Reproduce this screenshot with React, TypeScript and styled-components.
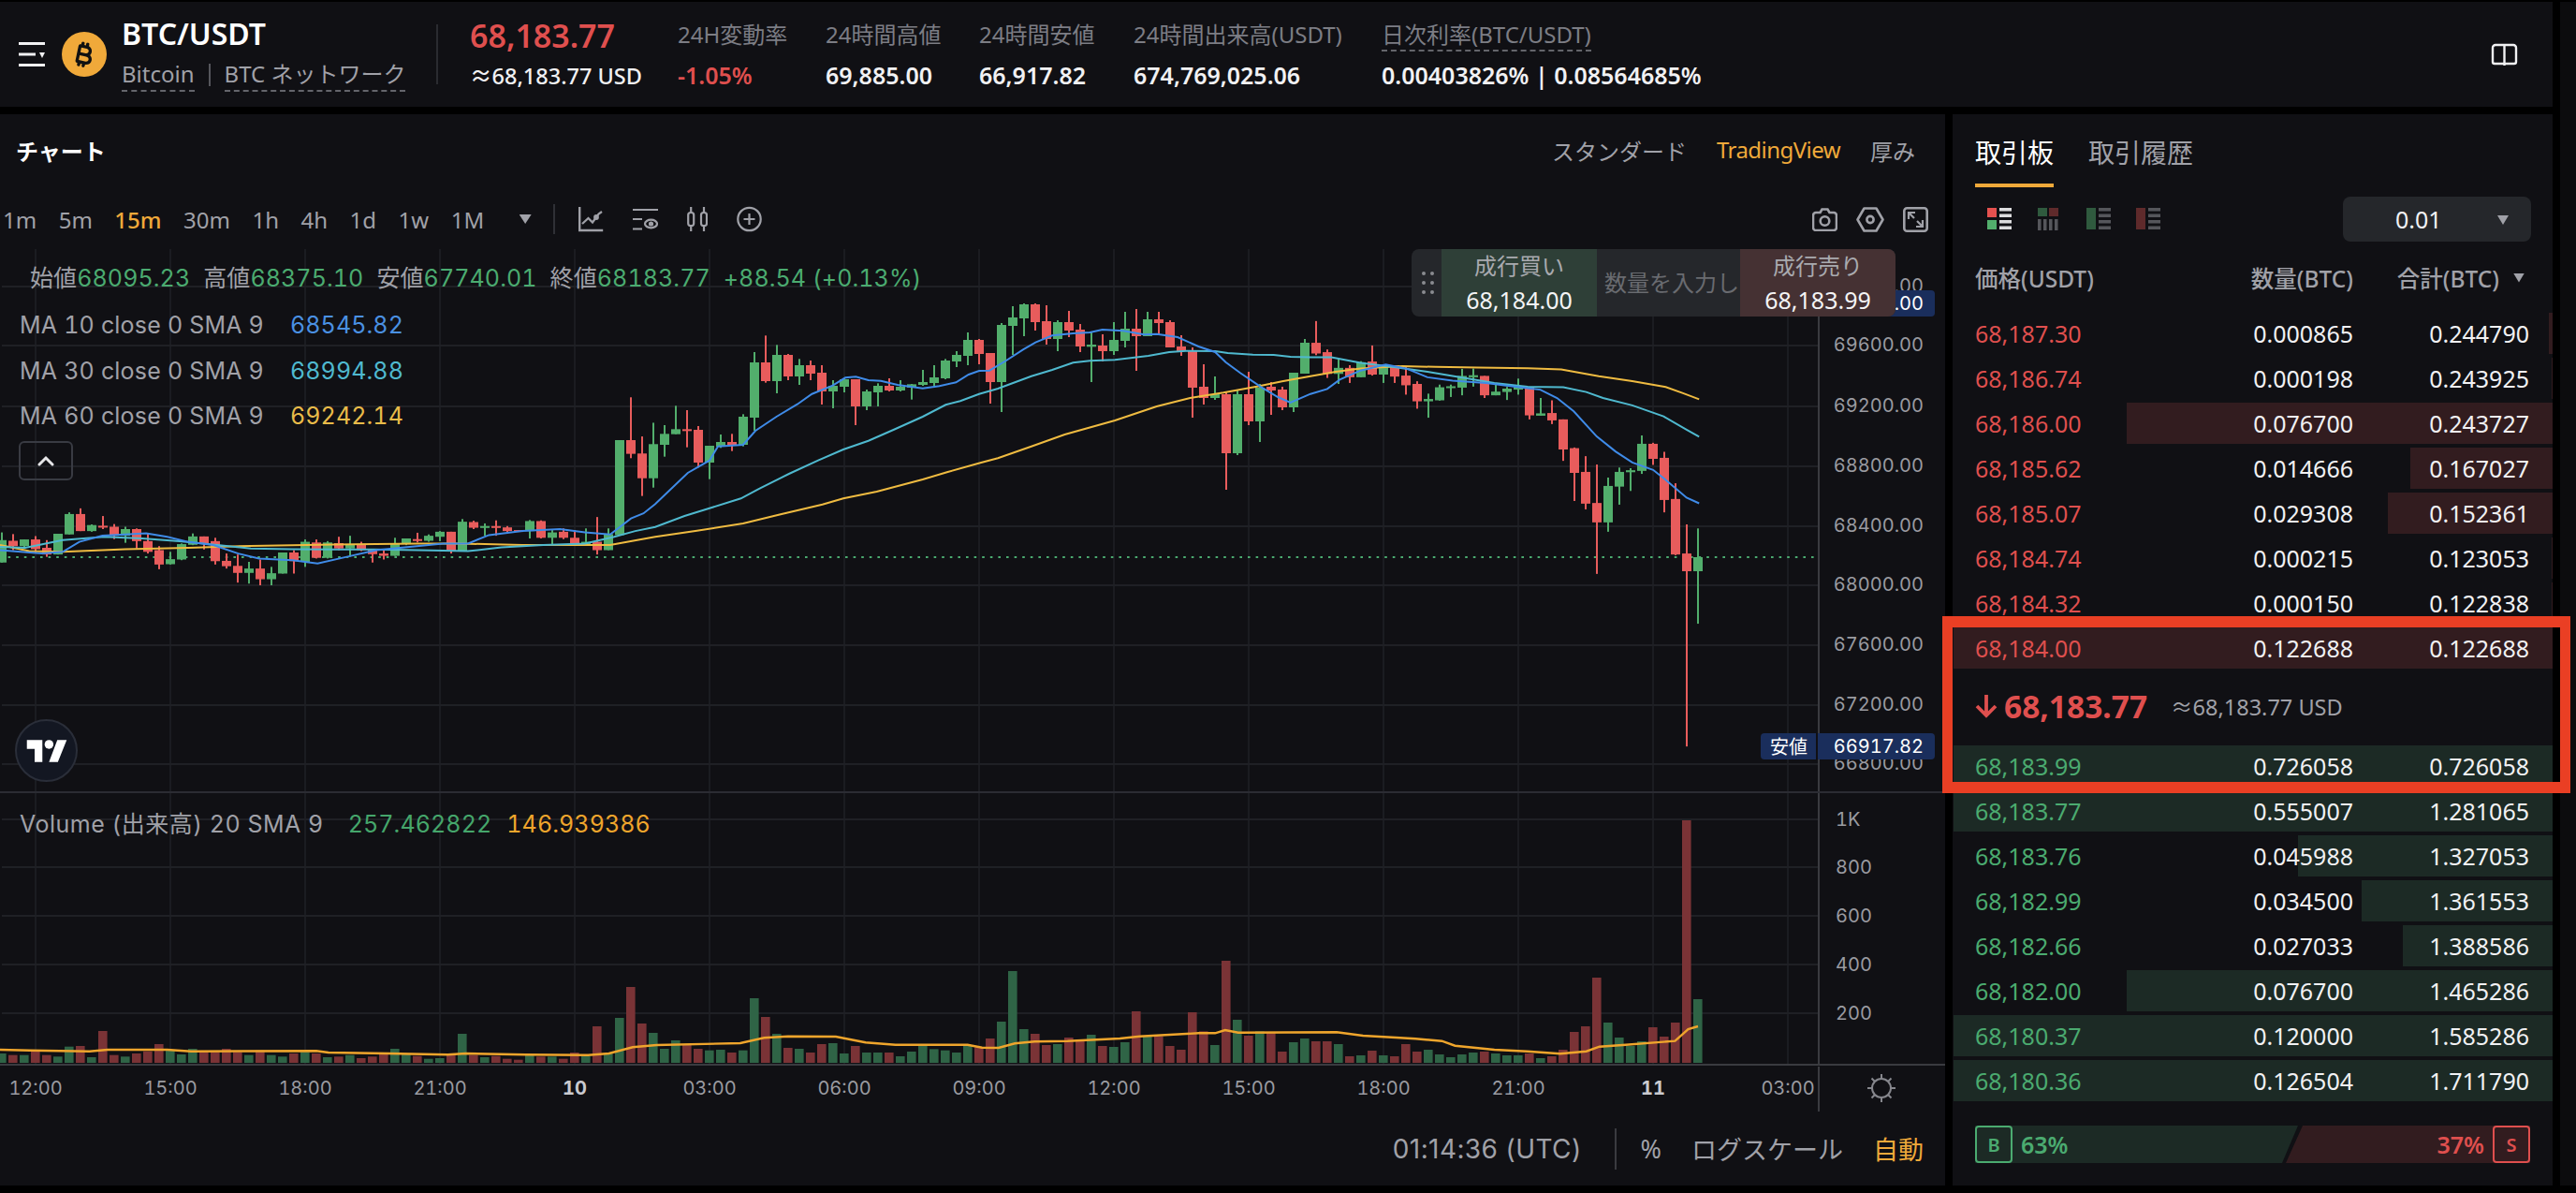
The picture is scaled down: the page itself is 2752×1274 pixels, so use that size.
import React from 'react';
import styled, { createGlobalStyle } from 'styled-components';
import { FaBitcoinSign } from 'react-icons/fa6';

const GlobalStyle = createGlobalStyle`
    html, body {
        margin: 0;
        padding: 0;
        background: #000;
    }
    * {
        box-sizing: border-box;
    }
`;

const PANEL = '#101014';
const GREY = '#a0a1a8';
const DIM = '#7c7d84';
const ORANGE = '#efa93a';
const RED = '#df4f4e';
const GREEN = '#4bab70';
const UP = '#52ae6c';
const DOWN = '#e85c5c';
const VOL_UP = '#2f6446';
const VOL_DOWN = '#7a3336';
const SANS = `"Noto Sans", "Noto Sans CJK JP", sans-serif`;
const CHART_FONT = `Inter, "Noto Sans CJK JP", sans-serif`;

/* ---------- chart data, in pixels of the plot ---------- */

type Raw = [number, number, number, number, number];

const toCandle = (scale: number) => ([up, top, bottom, wickTop, wickBottom]: Raw) => ({
    up: up === 1,
    top: 300 + top / scale,
    bottom: 300 + bottom / scale,
    wickTop: 300 + wickTop / scale,
    wickBottom: 300 + wickBottom / scale,
});

const firstRun: Raw[] = [
    [1, 775, 842, 752, 842], [0, 777, 793, 757, 805], [1, 773, 793, 773, 800], [0, 773, 802, 763, 815],
    [0, 798, 818, 775, 825], [1, 756, 818, 756, 818], [1, 697, 758, 692, 758], [0, 697, 748, 680, 748],
    [1, 730, 748, 728, 750], [0, 732, 737, 703, 742], [0, 735, 762, 727, 772], [1, 742, 762, 735, 783],
    [0, 742, 778, 740, 800], [0, 778, 810, 756, 815], [0, 805, 848, 793, 862], [1, 832, 847, 810, 848],
    [1, 787, 833, 785, 835], [1, 764, 789, 755, 790], [0, 764, 784, 764, 803], [0, 778, 838, 768, 848],
    [0, 837, 853, 815, 860], [0, 852, 873, 818, 902], [1, 860, 873, 840, 905], [0, 860, 892, 833, 910],
    [1, 874, 892, 855, 910], [1, 812, 875, 812, 875], [0, 812, 838, 805, 875], [1, 780, 840, 773, 855],
    [0, 782, 828, 773, 830], [1, 782, 828, 778, 830], [0, 784, 800, 765, 805], [1, 788, 800, 762, 825],
    [0, 787, 805, 780, 808], [0, 804, 817, 804, 842], [0, 815, 822, 805, 833], [1, 785, 822, 768, 822],
    [1, 770, 787, 770, 790], [0, 772, 777, 753, 782], [1, 762, 777, 758, 780], [1, 750, 765, 748, 778],
    [0, 750, 808, 750, 815], [1, 720, 808, 712, 808], [0, 721, 738, 717, 742], [1, 733, 737, 725, 762],
    [0, 733, 738, 716, 762], [0, 737, 748, 733, 752], [0, 745, 749, 745, 750], [1, 718, 748, 715, 770],
    [0, 718, 768, 716, 770], [1, 752, 768, 745, 788], [0, 750, 768, 740, 772], [0, 768, 786, 745, 790],
    [1, 780, 788, 740, 790], [0, 780, 805, 706, 818], [1, 757, 805, 740, 805], [1, 476, 760, 476, 760],
    [0, 476, 517, 348, 530], [0, 516, 590, 465, 643], [1, 488, 590, 424, 618],
];

const secondRun: Raw[] = [
    [1, 490, 525, 462, 563], [1, 475, 491, 400, 491], [0, 475, 480, 414, 533], [0, 477, 582, 465, 598],
    [1, 528, 582, 528, 635], [1, 516, 531, 492, 535], [0, 516, 525, 490, 545], [1, 435, 525, 427, 530],
    [1, 261, 438, 228, 480], [0, 261, 321, 175, 326], [1, 237, 321, 205, 360], [0, 237, 306, 234, 318],
    [1, 270, 306, 250, 333], [0, 270, 297, 255, 318], [0, 294, 354, 270, 396], [1, 336, 354, 318, 408],
    [1, 315, 339, 312, 357], [0, 315, 402, 315, 462], [1, 354, 402, 348, 414], [1, 336, 357, 328, 402],
    [0, 336, 351, 312, 354], [1, 339, 351, 318, 354], [1, 331, 342, 330, 380], [1, 324, 333, 285, 336],
    [1, 309, 327, 270, 336], [1, 255, 312, 250, 315], [1, 237, 258, 225, 276], [1, 189, 240, 165, 270],
    [0, 189, 234, 186, 267], [0, 231, 324, 231, 393], [1, 141, 324, 135, 420], [1, 117, 144, 81, 237],
    [1, 75, 120, 72, 177], [0, 75, 132, 72, 159], [0, 129, 186, 78, 204], [1, 132, 186, 126, 225],
    [0, 132, 159, 96, 180], [0, 156, 210, 138, 228], [1, 204, 211, 165, 324], [0, 207, 225, 171, 258],
    [1, 189, 225, 132, 237], [1, 153, 192, 99, 213], [0, 153, 177, 90, 288], [1, 123, 177, 99, 177],
    [0, 123, 135, 99, 171], [0, 132, 213, 126, 213], [0, 210, 225, 174, 240], [0, 222, 342, 213, 438],
    [0, 339, 375, 267, 396], [1, 363, 375, 306, 381], [0, 363, 552, 354, 669], [1, 363, 552, 351, 558],
    [0, 363, 450, 291, 462], [1, 342, 450, 330, 516], [0, 339, 351, 324, 429], [0, 348, 405, 339, 414],
    [1, 294, 405, 294, 420], [1, 198, 297, 186, 297],
];

const thirdRun: Raw[] = [
    [0, 185, 217, 120, 222], [0, 213, 278, 205, 290], [1, 260, 278, 234, 308], [0, 260, 288, 252, 305],
    [1, 243, 288, 240, 288], [0, 241, 280, 193, 283], [1, 252, 280, 250, 305], [0, 252, 286, 252, 305],
    [0, 283, 312, 255, 340], [0, 308, 360, 300, 382], [1, 353, 360, 337, 409], [1, 318, 357, 310, 358],
    [1, 315, 319, 310, 347], [1, 284, 319, 263, 342], [1, 282, 288, 262, 316], [0, 284, 342, 284, 350],
    [1, 331, 342, 306, 342], [1, 322, 332, 317, 356], [1, 315, 325, 292, 340], [0, 317, 402, 317, 414],
    [1, 396, 403, 350, 403], [0, 395, 417, 357, 428], [0, 414, 504, 414, 538], [0, 500, 574, 498, 658],
    [0, 571, 666, 524, 683], [0, 664, 722, 549, 876], [1, 613, 722, 588, 750], [1, 571, 615, 558, 669],
    [1, 566, 572, 560, 628], [1, 487, 568, 462, 577], [0, 487, 532, 484, 550], [0, 529, 655, 511, 692],
    [0, 652, 818, 605, 820], [0, 815, 868, 728, 1392], [1, 826, 868, 740, 1025],
];

const candles = [
    ...firstRun.map(toCandle(2.8)),
    ...secondRun.map(toCandle(3)),
    ...thirdRun.map(toCandle(2.8)),
];

const volumeTops = [
    795, 800, 800, 785, 800, 805, 773, 771, 807, 723, 800, 805, 795, 788, 765, 785, 798, 780, 790,
    790, 780, 790, 800, 785, 800, 805, 795, 790, 795, 807, 805, 800, 810, 805, 795, 780, 795, 803,
    812, 810, 800, 732, 800, 807, 803, 812, 815, 800, 805, 805, 812, 792, 803, 708, 795, 681, 582,
    699, 729, 780, 753, 766, 780, 785, 783, 792, 785, 618, 678, 732, 777, 780, 792, 765, 762, 795,
    771, 792, 792, 792, 804, 789, 771, 781, 785, 792, 770, 775, 747, 693, 531, 717, 732, 768, 765,
    744, 750, 735, 771, 774, 759, 660, 740, 740, 771, 783, 663, 724, 768, 498, 687, 738, 724, 726,
    789, 759, 747, 756, 756, 765, 804, 801, 786, 801, 804, 765, 789, 783, 798, 807, 798, 792, 789,
    795, 801, 801, 795, 810, 804, 783, 726, 708, 552, 696, 744, 771, 756, 711, 741, 696, 48, 621,
];

type Pt = [number, number];

const segment = (x0: number, sx: number, y0: number, sy: number, pts: Pt[]): Pt[] =>
    pts.map(([x, y]) => [x0 + x / sx, y0 + y / sy] as Pt);

const toPoints = (pts: Pt[]) => pts.map(([x, y]) => `${x.toFixed(1)},${y.toFixed(1)}`).join(' ');

const maBlue = toPoints([
    ...segment(0, 2.24, 300, 2.8, [[0, 805], [50, 810], [100, 815], [150, 810], [190, 780], [245, 762], [300, 758], [350, 755], [400, 765], [450, 780], [510, 790], [570, 815], [620, 830], [700, 835], [760, 845], [830, 825], [900, 805], [980, 795], [1060, 785], [1120, 785], [1170, 760], [1250, 748], [1340, 742], [1400, 752], [1460, 758], [1510, 710], [1540, 695]]),
    ...segment(700, 2.24, 300, 3, [[0, 715], [78, 615], [130, 575], [150, 530], [210, 525], [240, 480], [290, 435], [340, 395], [375, 362], [425, 335], [455, 310], [480, 307], [510, 318], [540, 320], [580, 333], [640, 344], [680, 337], [720, 325], [750, 300], [775, 288], [800, 287], [840, 255], [880, 220], [910, 197], [950, 175], [1000, 168], [1040, 165], [1070, 156], [1120, 160], [1170, 172], [1200, 170], [1250, 180], [1300, 210], [1340, 228], [1365, 260], [1400, 295], [1450, 340], [1490, 372], [1520, 390]]),
    ...segment(1400, 2.24, 300, 2.8, [[0, 338], [40, 323], [70, 295], [120, 268], [180, 250], [230, 262], [280, 288], [340, 298], [420, 305], [500, 318], [550, 325], [590, 350], [630, 390], [685, 465], [730, 510], [770, 543], [820, 565], [850, 595], [900, 648], [930, 665]]),
]);

const maTeal = toPoints([
    ...segment(0, 2.24, 300, 2.8, [[0, 795], [60, 798], [150, 775], [250, 765], [340, 770], [430, 778], [520, 790], [600, 800], [700, 802], [800, 803], [900, 803], [1000, 805], [1120, 808], [1200, 797], [1300, 790], [1400, 785], [1470, 765], [1520, 748]]),
    ...segment(700, 2.24, 300, 3, [[0, 788], [70, 753], [130, 728], [205, 697], [250, 665], [320, 618], [390, 575], [450, 540], [510, 512], [570, 477], [640, 435], [695, 397], [730, 385], [775, 362], [820, 345], [900, 305], [950, 285], [1000, 262], [1040, 256], [1100, 253], [1180, 240], [1230, 228], [1270, 224], [1340, 225], [1370, 231], [1430, 236], [1480, 237], [1520, 243]]),
    ...segment(1400, 2.24, 300, 2.8, [[0, 228], [50, 228], [120, 245], [200, 258], [280, 272], [360, 288], [440, 305], [520, 316], [605, 318], [660, 332], [700, 350], [770, 372], [845, 405], [900, 445], [930, 466]]),
]);

const maGold = toPoints([
    ...segment(0, 2.24, 300, 2.8, [[0, 790], [70, 808], [150, 810], [300, 802], [450, 798], [600, 792], [800, 788], [1000, 785], [1100, 785], [1250, 790], [1460, 790]]),
    ...segment(700, 2.24, 300, 3, [[0, 820], [100, 800], [210, 777], [300, 748], [400, 716], [450, 697], [530, 675], [640, 636], [700, 612], [780, 582], [820, 568], [900, 530], [980, 492], [1100, 447], [1200, 402], [1280, 375], [1360, 358], [1440, 338], [1500, 322]]),
    ...segment(1400, 2.24, 300, 2.8, [[0, 285], [60, 272], [120, 262], [220, 255], [300, 257], [400, 259], [520, 261], [600, 265], [690, 285], [770, 300], [850, 317], [890, 335], [930, 354]]),
]);

const volumeMa = toPoints([
    ...segment(0, 1.568, 860, 3, [[0, 783], [50, 785], [100, 787], [150, 788], [180, 783], [280, 783], [320, 788], [530, 787], [550, 792], [650, 795], [750, 799], [780, 795], [880, 799], [985, 800], [1020, 795], [1060, 775], [1100, 768], [1240, 762], [1280, 745], [1320, 740], [1400, 741], [1450, 760], [1500, 767]]),
    ...segment(1000, 1.425, 860, 3, [[0, 767], [48, 767], [70, 776], [95, 777], [120, 763], [150, 757], [200, 755], [280, 747], [310, 740], [400, 730], [425, 730], [440, 720], [460, 728], [610, 727], [650, 738], [700, 744], [730, 748], [770, 755], [790, 770], [850, 783], [900, 788], [950, 796], [990, 788], [1010, 773], [1050, 767], [1125, 755], [1145, 717], [1160, 708]]),
]);

const gridX = [38, 182, 326, 470, 614, 758, 902, 1046, 1190, 1334, 1478, 1622, 1766, 1910];
const priceTicks: [number, string][] = [
    [305, '.00'], [368, '69600.00'], [433, '69200.00'], [497, '68800.00'], [561, '68400.00'],
    [624, '68000.00'], [688, '67600.00'], [752, '67200.00'], [815, '66800.00'],
];
const volumeTicks: [number, string][] = [[875, '1K'], [926, '800'], [978, '600'], [1030, '400'], [1082, '200']];
const timeTicks = ['12:00', '15:00', '18:00', '21:00', '10', '03:00', '06:00', '09:00', '12:00', '15:00', '18:00', '21:00', '11', '03:00'];

/* ---------- page ---------- */

const Page = styled.div`
    position: relative;
    display: flex;
    gap: 8px;
    width: 2752px;
    height: 1274px;
    overflow: hidden;
    background: #000;
    font-family: ${SANS};
`;

const Main = styled.div`
    display: flex;
    flex-direction: column;
    gap: 8px;
    flex: 0 0 2726px;
    padding: 2px 0 8px;
`;

const ScrollTrack = styled.div`
    flex: 1;
    margin-top: 2px;
    margin-bottom: 8px;
    background: #0c0c0e;
`;

const Callout = styled.div`
    position: absolute;
    left: 2075px;
    top: 658px;
    width: 671px;
    height: 189px;
    border: solid #ea3f24;
    border-width: 12px 11px;
`;

/* ---------- top bar ---------- */

const TopBar = styled.header`
    display: flex;
    align-items: center;
    flex: 0 0 112px;
    padding: 0 37px 0 20px;
    background: ${PANEL};
`;

const CoinBadge = styled.div`
    display: flex;
    align-items: center;
    justify-content: center;
    flex: 0 0 48px;
    height: 48px;
    margin: 0 16px 0 18px;
    border-radius: 50%;
    background: #f0a93a;
    color: #111;
    font-size: 27px;
    svg {
        transform: rotate(12deg);
    }
`;

const NameBlock = styled.div`
    display: flex;
    flex-direction: column;
    gap: 8px;
    flex: 0 0 336px;
`;

const PairName = styled.div`
    color: #fff;
    font-size: 32px;
    font-weight: 600;
    line-height: 36px;
`;

const SubLine = styled.div`
    display: flex;
    align-items: center;
    gap: 15px;
    color: ${GREY};
    font-size: 24px;
    line-height: 34px;
`;

const Dashed = styled.span`
    border-bottom: 2px dashed #64656b;
    white-space: nowrap;
`;

const Pipe = styled.i`
    width: 2px;
    height: 24px;
    background: #55565c;
`;

const VRule = styled.div`
    flex: 0 0 2px;
    height: 64px;
    background: #2a2b30;
`;

const PriceBlock = styled.div`
    display: flex;
    flex-direction: column;
    gap: 8px;
    flex: 0 0 222px;
    margin-left: 34px;
`;

const LastPrice = styled.div`
    color: ${RED};
    font-size: 34px;
    font-weight: 600;
    line-height: 38px;
`;

const UsdPrice = styled.div`
    color: #f1f1f3;
    font-size: 23.5px;
    font-weight: 500;
    line-height: 32px;
    white-space: nowrap;
`;

const Stat = styled.div<{ $width?: number }>`
    display: flex;
    flex-direction: column;
    align-items: flex-start;
    gap: 11px;
    flex: 0 0 ${p => (p.$width ? `${p.$width}px` : 'auto')};
    white-space: nowrap;
`;

const StatLabel = styled.div`
    color: ${DIM};
    font-size: 24px;
    line-height: 32px;
`;

const StatValue = styled.div<{ $color?: string }>`
    color: ${p => p.$color || '#f1f1f3'};
    font-size: 25px;
    font-weight: 600;
    line-height: 32px;
`;

const BookButton = styled.div`
    display: flex;
    margin-left: auto;
`;

/* ---------- chart column ---------- */

const Columns = styled.div`
    display: flex;
    gap: 8px;
    flex: 1;
    min-height: 0;
`;

const ChartPanel = styled.section`
    display: flex;
    flex-direction: column;
    flex: 0 0 2078px;
    background: ${PANEL};
`;

const ChartHead = styled.div`
    display: flex;
    align-items: center;
    justify-content: space-between;
    flex: 0 0 80px;
    padding: 0 32px 3px 17px;
`;

const ChartTitle = styled.div`
    color: #fff;
    font-size: 24px;
    font-weight: 700;
`;

const ViewTabs = styled.div`
    display: flex;
    gap: 32px;
`;

const ViewTab = styled.span<{ $active?: boolean }>`
    color: ${p => (p.$active ? ORANGE : GREY)};
    font-size: 24px;
    letter-spacing: ${p => (p.$active ? '-0.55px' : 0)};
`;

const Toolbar = styled.div`
    display: flex;
    align-items: center;
    gap: 23.5px;
    flex: 0 0 64px;
    padding: 0 18px 0 3px;
`;

const Interval = styled.span<{ $active?: boolean }>`
    color: ${p => (p.$active ? ORANGE : GREY)};
    font-size: 24px;
    font-weight: ${p => (p.$active ? 500 : 400)};
`;

const Caret = styled.i`
    flex: 0 0 auto;
    width: 13px;
    height: 10px;
    margin-left: 14px;
    background: ${GREY};
    clip-path: polygon(0 0, 100% 0, 50% 100%);
`;

const ToolRule = styled.i`
    width: 2px;
    height: 32px;
    background: #2f3036;
`;

const DrawTools = styled.div`
    display: flex;
    align-items: center;
    gap: 31px;
    margin-left: 1px;
`;

const ToolSet = styled.div`
    display: flex;
    align-items: center;
    gap: 20px;
    margin-left: auto;
`;

const PlotWrap = styled.div`
    position: relative;
    height: 581px;
`;

const Plot = styled.svg`
    display: block;
    font-family: ${CHART_FONT};
    font-variant-numeric: tabular-nums;
`;

const AxisText = styled.text`
    fill: #9a9ba1;
    font-size: 20px;
`;

const BadgeText = styled.text`
    fill: #fff;
    font-size: 20px;
`;

const TimeText = styled.text<{ $bold?: boolean }>`
    fill: ${p => (p.$bold ? '#c9cacf' : '#9a9ba1')};
    font-size: 20px;
    font-weight: ${p => (p.$bold ? 700 : 400)};
    text-anchor: middle;
`;

const OhlcRow = styled.div`
    position: absolute;
    left: 32px;
    top: 14px;
    display: flex;
    gap: 14px;
    color: ${GREY};
    font-family: ${CHART_FONT};
    font-size: 25px;
    font-variant-numeric: tabular-nums;
    letter-spacing: 0.1px;
    line-height: 34px;
    white-space: nowrap;
`;

const Green = styled.span`
    color: ${GREEN};
`;

const Legend = styled.div`
    position: absolute;
    left: 21px;
    top: 57px;
    display: flex;
    flex-direction: column;
    align-items: flex-start;
    font-family: ${CHART_FONT};
    font-variant-numeric: tabular-nums;
`;

const LegendRow = styled.div`
    display: grid;
    grid-template-columns: 289px auto;
    color: ${GREY};
    font-size: 25px;
    letter-spacing: 0.2px;
    line-height: 48.5px;
    white-space: nowrap;
`;

const LegendValue = styled.span<{ $color: string; $gap?: number }>`
    margin-left: ${p => p.$gap || 0}px;
    color: ${p => p.$color};
    letter-spacing: 0.1px;
`;

const CollapseButton = styled.div`
    display: flex;
    align-items: center;
    justify-content: center;
    width: 58px;
    height: 42px;
    margin: 2px 0 0 -1px;
    border: 2px solid #393b43;
    border-radius: 6px;
`;

const TvBadge = styled.div`
    position: absolute;
    left: 16px;
    top: 502px;
    display: flex;
    align-items: center;
    justify-content: center;
    width: 67px;
    height: 67px;
    border: 2px solid #2a2e39;
    border-radius: 50%;
    background: #131722;
`;

const QuickTrade = styled.div`
    position: absolute;
    left: 1508px;
    top: 0;
    display: flex;
    width: 517px;
    height: 72px;
    overflow: hidden;
    border-radius: 8px;
    background: #25272b;
    font-size: 24px;
`;

const DragHandle = styled.div`
    display: grid;
    grid-template-columns: 4px 4px;
    align-content: center;
    gap: 6px 5px;
    flex: 0 0 32px;
    padding-left: 11px;
    i {
        width: 4px;
        height: 4px;
        border-radius: 50%;
        background: #8a8b90;
    }
`;

const TradeSide = styled.div<{ $bg: string }>`
    display: flex;
    flex-direction: column;
    align-items: center;
    justify-content: center;
    gap: 4px;
    flex: 0 0 166px;
    background: ${p => p.$bg};
    line-height: 32px;
    span {
        color: #a9aaaf;
    }
    b {
        color: #f4f4f5;
        font-size: 25px;
        font-weight: 400;
    }
`;

const AmountHint = styled.div`
    flex: 0 0 153px;
    padding-left: 8px;
    color: #696b70;
    line-height: 72px;
    white-space: nowrap;
`;

const VolumeWrap = styled.div`
    position: relative;
    height: 292px;
`;

const VolumeLegend = styled.div`
    position: absolute;
    left: 21px;
    top: 16px;
    display: flex;
    color: ${GREY};
    font-family: ${CHART_FONT};
    font-size: 25px;
    font-variant-numeric: tabular-nums;
    letter-spacing: 0.5px;
    line-height: 34px;
    white-space: nowrap;
`;

const ChartFooter = styled.div`
    display: flex;
    align-items: center;
    justify-content: flex-end;
    gap: 32px;
    flex: 1;
    padding: 0 23px 0 0;
    color: ${GREY};
    font-size: 27px;
`;

const ClockText = styled.span`
    margin-right: 2px;
    font-family: ${CHART_FONT};
    font-size: 28px;
    letter-spacing: 0.4px;
`;

const FootRule = styled.i`
    width: 2px;
    height: 44px;
    margin: 0 -6px 0 1px;
    background: #3a3b40;
`;

const FootItem = styled.span<{ $active?: boolean }>`
    color: ${p => (p.$active ? ORANGE : GREY)};
`;

/* ---------- order book ---------- */

const BookPanel = styled.section`
    position: relative;
    display: flex;
    flex-direction: column;
    flex: 1;
    background: ${PANEL};
`;

const BookTabs = styled.div`
    display: flex;
    gap: 37px;
    padding: 21px 24px 0;
`;

const BookTab = styled.div<{ $active?: boolean }>`
    padding-bottom: 13px;
    border-bottom: 4px solid ${p => (p.$active ? ORANGE : 'transparent')};
    color: ${p => (p.$active ? '#fff' : GREY)};
    font-size: 28px;
    line-height: 40px;
`;

const BookControls = styled.div`
    display: flex;
    align-items: center;
    justify-content: space-between;
    margin-top: 10px;
    padding: 0 23px 0 37px;
`;

const LayoutIcons = styled.div`
    display: flex;
    gap: 27px;
`;

const Stepper = styled.div`
    position: relative;
    width: 201px;
    height: 48px;
    padding-left: 56px;
    border-radius: 8px;
    background: #25272b;
    color: #f1f1f3;
    font-size: 25px;
    line-height: 48px;
`;

const StepperCaret = styled.i`
    position: absolute;
    right: 24px;
    top: 20px;
    width: 12px;
    height: 10px;
    background: ${GREY};
    clip-path: polygon(0 0, 100% 0, 50% 100%);
`;

const BookGrid = styled.div`
    display: grid;
    grid-template-columns: 232px 172px 188px;
    align-items: center;
`;

const BookHead = styled(BookGrid)`
    height: 48px;
    margin: 14px 24px 14px;
    color: ${GREY};
    font-size: 24.5px;
    font-weight: 500;
`;

const HeadRight = styled.div<{ $sorted?: boolean }>`
    position: relative;
    padding-right: ${p => (p.$sorted ? '32px' : 0)};
    text-align: right;
    white-space: nowrap;
`;

const SortCaret = styled.i`
    position: absolute;
    right: 5px;
    top: 13px;
    width: 12px;
    height: 10px;
    background: ${GREY};
    clip-path: polygon(0 0, 100% 0, 50% 100%);
`;

const RowStack = styled.div`
    display: flex;
    flex-direction: column;
    gap: 4px;
`;

const Row = styled.div`
    position: relative;
    height: 44px;
`;

const Depth = styled.div<{ $side: 'ask' | 'bid' }>`
    position: absolute;
    right: 0;
    top: 0;
    bottom: 0;
    background: ${p => (p.$side === 'ask' ? '#321c1f' : '#1c2a25')};
`;

const RowCells = styled(BookGrid)`
    position: relative;
    height: 44px;
    padding: 0 24px;
    color: #f1f1f3;
    font-size: 25px;
`;

const RowPrice = styled.div<{ $side: 'ask' | 'bid' }>`
    color: ${p => (p.$side === 'ask' ? RED : GREEN)};
`;

const RowValue = styled.div`
    text-align: right;
`;

const MidPrice = styled.div`
    display: flex;
    align-items: center;
    flex: 0 0 82px;
    height: 82px;
    padding: 0 0 3px 24px;
`;

const MidValue = styled.span`
    margin: 0 25px 0 7px;
    color: ${RED};
    font-size: 33.5px;
    font-weight: 700;
`;

const MidUsd = styled.span`
    color: ${GREY};
    font-size: 23.5px;
`;

const Ratio = styled.div`
    display: flex;
    height: 40px;
    margin: 26px 24px 0;
`;

const RatioSide = styled.div<{ $side: 'buy' | 'sell' }>`
    display: flex;
    align-items: center;
    justify-content: ${p => (p.$side === 'buy' ? 'flex-start' : 'flex-end')};
    flex: 0 0 ${p => (p.$side === 'buy' ? '345px' : '261px')};
    margin-left: ${p => (p.$side === 'buy' ? 0 : '-13px')};
    background: ${p => (p.$side === 'buy' ? '#1c2a25' : '#321c1f')};
    clip-path: ${p =>
        p.$side === 'buy'
            ? 'polygon(0 0, 100% 0, calc(100% - 17px) 100%, 0 100%)'
            : 'polygon(18px 0, 100% 0, 100% 100%, 0 100%)'};
    color: ${p => (p.$side === 'buy' ? GREEN : RED)};
    font-size: 25px;
    font-weight: 600;
`;

const RatioTag = styled.span<{ $color: string }>`
    display: flex;
    align-items: center;
    justify-content: center;
    flex: 0 0 40px;
    height: 40px;
    border: 2px solid ${p => p.$color};
    border-radius: 4px;
    color: ${p => p.$color};
    font-size: 20px;
    font-weight: 600;
`;

const RatioText = styled.span`
    margin: 0 9px;
`;

/* ---------- icons ---------- */

const MenuIcon = () => (
    <svg width="28" height="26" viewBox="0 0 28 26" fill="none">
        <path d="M0 1.5h28M0 13h18M0 24.5h28" stroke="#f1f1f3" strokeWidth="3" />
        <path d="M22 11h6l-3 6z" fill="#f1f1f3" />
    </svg>
);

const BookIcon = () => (
    <svg width="29" height="26" viewBox="0 0 29 26" fill="none" stroke="#f1f1f3" strokeWidth="2.4" strokeLinejoin="round">
        <path d="M14.5 3H5a3 3 0 0 0-3 3v15a2 2 0 0 0 2 2h10.5M14.5 3H24a3 3 0 0 1 3 3v15a2 2 0 0 1-2 2H14.5M14.5 3v22" />
    </svg>
);

const ToolIcon = ({ width, height, children }: { width: number; height: number; children: React.ReactNode }) => (
    <svg width={width} height={height} viewBox={`0 0 ${width} ${height}`} fill="none" stroke="#a0a1a8" strokeWidth="2.2">
        {children}
    </svg>
);

const LineChartIcon = () => (
    <ToolIcon width={27} height={28}>
        <path d="M1.2 1v25h25" strokeWidth="2.4" />
        <path d="M4 19l6.5-6 4.5 4.5 6.5-9L25 6" />
        <circle cx="19" cy="12" r="1.8" fill="#a0a1a8" />
    </ToolIcon>
);

const IndicatorIcon = () => (
    <ToolIcon width={27} height={24}>
        <path d="M0 2h27M0 12h10M0 22.5h10" />
        <ellipse cx="19.5" cy="17" rx="6.5" ry="4.3" />
        <circle cx="19.5" cy="17" r="1.5" fill="#a0a1a8" />
    </ToolIcon>
);

const CandleIcon = () => (
    <ToolIcon width={22} height={28}>
        <rect x="1.2" y="7" width="6" height="14" rx="2.6" />
        <rect x="15" y="7" width="6" height="14" rx="2.6" />
        <path d="M4.2 1v6M4.2 21v6M18 1v6M18 21v6" />
    </ToolIcon>
);

const PlusCircleIcon = () => (
    <ToolIcon width={27} height={28}>
        <circle cx="13.5" cy="14" r="12.2" />
        <path d="M13.5 8v12M7.5 14h12" />
    </ToolIcon>
);

const CameraIcon = () => (
    <ToolIcon width={27} height={25}>
        <path d="M8.5 5l2-3.5h6l2 3.5H23a3 3 0 0 1 3 3v13a3 3 0 0 1-3 3H4a3 3 0 0 1-3-3V8a3 3 0 0 1 3-3z" strokeWidth="2.6" />
        <circle cx="13.5" cy="14" r="4.8" strokeWidth="2.6" />
    </ToolIcon>
);

const SettingsIcon = () => (
    <ToolIcon width={30} height={27}>
        <path d="M8.5 1.5h13L28.5 13.5l-7 12h-13L1.5 13.5z" strokeWidth="2.6" strokeLinejoin="round" />
        <circle cx="15" cy="13.5" r="3.6" strokeWidth="2.6" />
    </ToolIcon>
);

const ExpandIcon = () => (
    <ToolIcon width={27} height={27}>
        <rect x="1.3" y="1.3" width="24.4" height="24.4" rx="3" strokeWidth="2.6" />
        <path d="M6 13V6h7M6 6l6 6M21 14v7h-7M21 21l-6-6" />
    </ToolIcon>
);

const ChevronUp = () => (
    <svg width="18" height="12" viewBox="0 0 18 12" fill="none" stroke="#e6e6e8" strokeWidth="3" strokeLinecap="round">
        <path d="M2 10l7-7 7 7" />
    </svg>
);

const TvLogo = () => (
    <svg width="44" height="26" viewBox="0 0 36 22" fill="#fff">
        <path d="M14 21H7V9H0V1h14zM28 21h-8l7.5-20H36z" />
        <circle cx="20" cy="5" r="4" />
    </svg>
);

const SunIcon = ({ cx, cy }: { cx: number; cy: number }) => (
    <g fill="none" stroke="#86878d" strokeWidth="2" transform={`translate(${cx} ${cy})`}>
        <circle r="10" />
        <path d="M0-10v-5M0 10v5M-10 0h-5M10 0h5M-7-7l-3.5-3.5M7-7l3.5-3.5M-7 7l-3.5 3.5M7 7l3.5 3.5" />
    </g>
);

const StripeSet = ({ x, color }: { x: number; color: string }) => (
    <g fill={color}>
        <rect x={x} y="0" width="13" height="3.5" />
        <rect x={x} y="6.5" width="13" height="3.5" />
        <rect x={x} y="13" width="13" height="3.5" />
        <rect x={x} y="19.5" width="13" height="3.5" />
    </g>
);

const BothSidesIcon = () => (
    <svg width="26" height="24" viewBox="0 0 26 24">
        <rect width="10" height="10" fill="#e5514f" />
        <rect y="13" width="10" height="10" fill="#52ae6c" />
        <StripeSet x={13} color="#dcdcde" />
    </svg>
);

const ColumnsIcon = () => (
    <svg width="26" height="24" viewBox="0 0 26 24">
        <rect x="1" y="-1" width="10" height="10" fill="#2f5a3e" />
        <rect x="13" y="-1" width="10" height="10" fill="#5f2a2b" />
        <g fill="#55565b">
            <rect x="1" y="12" width="3.5" height="12" />
            <rect x="7" y="12" width="3.5" height="12" />
            <rect x="13" y="12" width="3.5" height="12" />
            <rect x="19" y="12" width="3.5" height="12" />
        </g>
    </svg>
);

const SideIcon = ({ color }: { color: string }) => (
    <svg width="26" height="24" viewBox="0 0 26 24">
        <rect width="10" height="23" fill={color} />
        <StripeSet x={13} color="#55565b" />
    </svg>
);

const ArrowDown = () => (
    <svg width="24" height="26" viewBox="0 0 24 26" fill="none" stroke={RED} strokeWidth="3.8">
        <path d="M12 1v22M2 13l10 10 10-10" />
    </svg>
);

/* ---------- chart parts ---------- */

const GridLines = ({ top, bottom, rows }: { top: number; bottom: number; rows: number[] }) => (
    <g>
        {gridX.map(x => (
            <line key={x} x1={x} x2={x} y1={top} y2={bottom} stroke="#1b1c21" strokeWidth="2" />
        ))}
        {rows.map(y => (
            <line key={y} x1="2" x2="1943" y1={y} y2={y} stroke="#1f2025" strokeWidth="2" />
        ))}
    </g>
);

const PriceChart = () => (
    <Plot width="2078" height="581" viewBox="0 266 2078 581">
        <GridLines top={266} bottom={846} rows={priceTicks.map(t => t[0] + 1)} />
        <line x1="0" x2="1943" y1="595" y2="595" stroke={GREEN} strokeWidth="2" strokeDasharray="2.6 6" />
        {candles.map((c, i) => {
            const x = 2 + i * 12;
            const fill = c.up ? UP : DOWN;
            return (
                <g key={i} fill={fill}>
                    <rect x={x - 1} y={c.wickTop} width="2" height={c.wickBottom - c.wickTop} />
                    <rect x={x - 5} y={c.top} width="10" height={Math.max(c.bottom - c.top, 2)} />
                </g>
            );
        })}
        <polyline points={maGold} fill="none" stroke="#efbb41" strokeWidth="2" />
        <polyline points={maTeal} fill="none" stroke="#4fb9cf" strokeWidth="2" />
        <polyline points={maBlue} fill="none" stroke="#3f8be8" strokeWidth="2" />
        <line x1="1943" x2="1943" y1="266" y2="846" stroke="#3a3b40" strokeWidth="2" />
        <line x1="0" x2="2078" y1="846" y2="846" stroke="#2b2c33" strokeWidth="2" />
        {priceTicks.map(([y, label]) => (
            <AxisText key={label} x="2055" y={y} textAnchor="end" dominantBaseline="central">
                {label}
            </AxisText>
        ))}
        <rect x="1950" y="310" width="117" height="28" rx="4" fill="#1a2e5c" />
        <BadgeText x="2055" y="324" textAnchor="end" dominantBaseline="central">
            .00
        </BadgeText>
        <rect x="1881" y="783" width="186" height="28" rx="4" fill="#1a2e5c" />
        <line x1="1941" x2="1941" y1="783" y2="811" stroke={PANEL} strokeWidth="2" />
        <BadgeText x="1911" y="797" textAnchor="middle" dominantBaseline="central" fontFamily={SANS}>
            安値
        </BadgeText>
        <BadgeText x="2055" y="797" textAnchor="end" dominantBaseline="central">
            66917.82
        </BadgeText>
    </Plot>
);

const VolumeChart = () => (
    <Plot width="2078" height="292" viewBox="0 847 2078 292">
        <GridLines top={847} bottom={1137} rows={volumeTicks.map(t => t[0])} />
        {volumeTops.map((top, i) => (
            <rect
                key={i}
                x={2 + i * 12 - 5}
                y={860 + top / 3}
                width="9.6"
                height={1135 - (860 + top / 3)}
                fill={candles[i].up ? VOL_UP : VOL_DOWN}
            />
        ))}
        <polyline points={volumeMa} fill="none" stroke="#efa52c" strokeWidth="2.4" />
        <line x1="1943" x2="1943" y1="847" y2="1137" stroke="#3a3b40" strokeWidth="2" />
        <line x1="0" x2="2078" y1="1137" y2="1137" stroke="#3a3b40" strokeWidth="2" />
        {volumeTicks.map(([y, label]) => (
            <AxisText key={label} x="1961" y={y} dominantBaseline="central">
                {label}
            </AxisText>
        ))}
    </Plot>
);

const TimeAxis = () => (
    <Plot width="2078" height="48" viewBox="0 1139 2078 48">
        {timeTicks.map((label, i) => (
            <TimeText key={i} x={gridX[i]} y="1162" $bold={label.length === 2} dominantBaseline="central">
                {label}
            </TimeText>
        ))}
        <line x1="1943" x2="1943" y1="1139" y2="1187" stroke="#3a3b40" strokeWidth="2" />
        <SunIcon cx={2010} cy={1162} />
    </Plot>
);

/* ---------- order book data ---------- */

type BookRow = { price: string; size: string; total: string; depth: number };

const asks: BookRow[] = [
    { price: '68,187.30', size: '0.000865', total: '0.244790', depth: 4 },
    { price: '68,186.74', size: '0.000198', total: '0.243925', depth: 1 },
    { price: '68,186.00', size: '0.076700', total: '0.243727', depth: 455 },
    { price: '68,185.62', size: '0.014666', total: '0.167027', depth: 152 },
    { price: '68,185.07', size: '0.029308', total: '0.152361', depth: 176 },
    { price: '68,184.74', size: '0.000215', total: '0.123053', depth: 1 },
    { price: '68,184.32', size: '0.000150', total: '0.122838', depth: 1 },
    { price: '68,184.00', size: '0.122688', total: '0.122688', depth: 640 },
];

const bids: BookRow[] = [
    { price: '68,183.99', size: '0.726058', total: '0.726058', depth: 640 },
    { price: '68,183.77', size: '0.555007', total: '1.281065', depth: 640 },
    { price: '68,183.76', size: '0.045988', total: '1.327053', depth: 272 },
    { price: '68,182.99', size: '0.034500', total: '1.361553', depth: 204 },
    { price: '68,182.66', size: '0.027033', total: '1.388586', depth: 160 },
    { price: '68,182.00', size: '0.076700', total: '1.465286', depth: 455 },
    { price: '68,180.37', size: '0.120000', total: '1.585286', depth: 640 },
    { price: '68,180.36', size: '0.126504', total: '1.711790', depth: 640 },
];

const BookLine = ({ row, side }: { row: BookRow; side: 'ask' | 'bid' }) => (
    <Row>
        <Depth $side={side} style={{ width: row.depth }} />
        <RowCells>
            <RowPrice $side={side}>{row.price}</RowPrice>
            <RowValue>{row.size}</RowValue>
            <RowValue>{row.total}</RowValue>
        </RowCells>
    </Row>
);

const intervals = ['1m', '5m', '15m', '30m', '1h', '4h', '1d', '1w', '1M'];

const App = () => (
    <Page>
        <GlobalStyle />
        <Main>
            <TopBar>
                <MenuIcon />
                <CoinBadge>
                    <FaBitcoinSign />
                </CoinBadge>
                <NameBlock>
                    <PairName>BTC/USDT</PairName>
                    <SubLine>
                        <Dashed>Bitcoin</Dashed>
                        <Pipe />
                        <Dashed>BTC ネットワーク</Dashed>
                    </SubLine>
                </NameBlock>
                <VRule />
                <PriceBlock>
                    <LastPrice>68,183.77</LastPrice>
                    <UsdPrice>≈68,183.77 USD</UsdPrice>
                </PriceBlock>
                <Stat $width={158}>
                    <StatLabel>24H変動率</StatLabel>
                    <StatValue $color={RED}>-1.05%</StatValue>
                </Stat>
                <Stat $width={164}>
                    <StatLabel>24時間高値</StatLabel>
                    <StatValue>69,885.00</StatValue>
                </Stat>
                <Stat $width={165}>
                    <StatLabel>24時間安値</StatLabel>
                    <StatValue>66,917.82</StatValue>
                </Stat>
                <Stat $width={265}>
                    <StatLabel>24時間出来高(USDT)</StatLabel>
                    <StatValue>674,769,025.06</StatValue>
                </Stat>
                <Stat>
                    <StatLabel>
                        <Dashed>日次利率(BTC/USDT)</Dashed>
                    </StatLabel>
                    <StatValue>0.00403826% | 0.08564685%</StatValue>
                </Stat>
                <BookButton>
                    <BookIcon />
                </BookButton>
            </TopBar>
            <Columns>
                <ChartPanel>
                    <ChartHead>
                        <ChartTitle>チャート</ChartTitle>
                        <ViewTabs>
                            <ViewTab>スタンダード</ViewTab>
                            <ViewTab $active>TradingView</ViewTab>
                            <ViewTab>厚み</ViewTab>
                        </ViewTabs>
                    </ChartHead>
                    <Toolbar>
                        {intervals.map(label => (
                            <Interval key={label} $active={label === '15m'}>
                                {label}
                            </Interval>
                        ))}
                        <Caret />
                        <ToolRule />
                        <DrawTools>
                            <LineChartIcon />
                            <IndicatorIcon />
                            <CandleIcon />
                            <PlusCircleIcon />
                        </DrawTools>
                        <ToolSet>
                            <CameraIcon />
                            <SettingsIcon />
                            <ExpandIcon />
                        </ToolSet>
                    </Toolbar>
                    <PlotWrap>
                        <PriceChart />
                        <OhlcRow>
                            <span>
                                始値<Green>68095.23</Green>
                            </span>
                            <span>
                                高値<Green>68375.10</Green>
                            </span>
                            <span>
                                安値<Green>67740.01</Green>
                            </span>
                            <span>
                                終値<Green>68183.77</Green>
                            </span>
                            <Green>+88.54 (+0.13%)</Green>
                        </OhlcRow>
                        <Legend>
                            <LegendRow>
                                <span>MA 10 close 0 SMA 9</span>
                                <LegendValue $color="#4a90e2">68545.82</LegendValue>
                            </LegendRow>
                            <LegendRow>
                                <span>MA 30 close 0 SMA 9</span>
                                <LegendValue $color="#4fb9cf">68994.88</LegendValue>
                            </LegendRow>
                            <LegendRow>
                                <span>MA 60 close 0 SMA 9</span>
                                <LegendValue $color="#e9bb49">69242.14</LegendValue>
                            </LegendRow>
                            <CollapseButton>
                                <ChevronUp />
                            </CollapseButton>
                        </Legend>
                        <TvBadge>
                            <TvLogo />
                        </TvBadge>
                        <QuickTrade>
                            <DragHandle>
                                <i />
                                <i />
                                <i />
                                <i />
                                <i />
                                <i />
                            </DragHandle>
                            <TradeSide $bg="#2e3f37">
                                <span>成行買い</span>
                                <b>68,184.00</b>
                            </TradeSide>
                            <AmountHint>数量を入力し</AmountHint>
                            <TradeSide $bg="#453133">
                                <span>成行売り</span>
                                <b>68,183.99</b>
                            </TradeSide>
                        </QuickTrade>
                    </PlotWrap>
                    <VolumeWrap>
                        <VolumeChart />
                        <VolumeLegend>
                            Volume (出来高) 20 SMA 9
                            <LegendValue $color="#45a66b" $gap={26}>
                                257.462822
                            </LegendValue>
                            <LegendValue $color="#efa52c" $gap={16}>
                                146.939386
                            </LegendValue>
                        </VolumeLegend>
                    </VolumeWrap>
                    <TimeAxis />
                    <ChartFooter>
                        <ClockText>01:14:36 (UTC)</ClockText>
                        <FootRule />
                        <FootItem>%</FootItem>
                        <FootItem>ログスケール</FootItem>
                        <FootItem $active>自動</FootItem>
                    </ChartFooter>
                </ChartPanel>
                <BookPanel>
                    <BookTabs>
                        <BookTab $active>取引板</BookTab>
                        <BookTab>取引履歴</BookTab>
                    </BookTabs>
                    <BookControls>
                        <LayoutIcons>
                            <BothSidesIcon />
                            <ColumnsIcon />
                            <SideIcon color="#2f5a3e" />
                            <SideIcon color="#5f2a2b" />
                        </LayoutIcons>
                        <Stepper>
                            0.01
                            <StepperCaret />
                        </Stepper>
                    </BookControls>
                    <BookHead>
                        <div>価格(USDT)</div>
                        <HeadRight>数量(BTC)</HeadRight>
                        <HeadRight $sorted>
                            合計(BTC)
                            <SortCaret />
                        </HeadRight>
                    </BookHead>
                    <RowStack>
                        {asks.map(row => (
                            <BookLine key={row.price} row={row} side="ask" />
                        ))}
                    </RowStack>
                    <MidPrice>
                        <ArrowDown />
                        <MidValue>68,183.77</MidValue>
                        <MidUsd>≈68,183.77 USD</MidUsd>
                    </MidPrice>
                    <RowStack>
                        {bids.map(row => (
                            <BookLine key={row.price} row={row} side="bid" />
                        ))}
                    </RowStack>
                    <Ratio>
                        <RatioSide $side="buy">
                            <RatioTag $color={GREEN}>B</RatioTag>
                            <RatioText>63%</RatioText>
                        </RatioSide>
                        <RatioSide $side="sell">
                            <RatioText>37%</RatioText>
                            <RatioTag $color={RED}>S</RatioTag>
                        </RatioSide>
                    </Ratio>
                </BookPanel>
            </Columns>
        </Main>
        <ScrollTrack />
        <Callout />
    </Page>
);

export default App;
